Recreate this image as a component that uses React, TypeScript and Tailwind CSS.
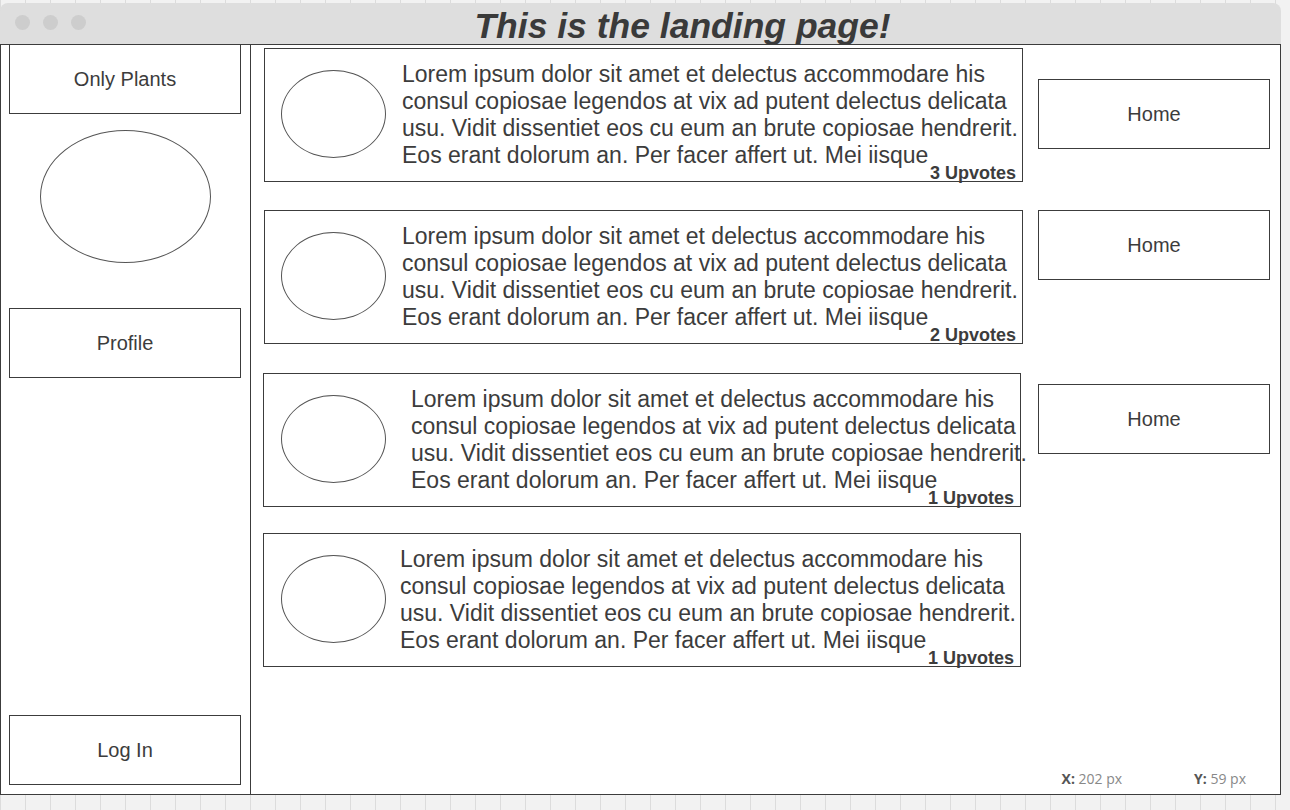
// ─── Landing Page Wireframe ──────────────────────────────
const lines = [
  'Lorem ipsum dolor sit amet et delectus accommodare his',
  'consul copiosae legendos at vix ad putent delectus delicata',
  'usu. Vidit dissentiet eos cu eum an brute copiosae hendrerit.',
  'Eos erant dolorum an. Per facer affert ut. Mei iisque',
]

const posts = [
  { votes: 3, wrap: 'ml-[13px] mt-[3px] w-[759px]', circle: 'ml-[16px]', text: 'ml-[16px]' },
  { votes: 2, wrap: 'ml-[13px] mt-[28px] w-[759px]', circle: 'ml-[16px]', text: 'ml-[16px]' },
  { votes: 1, wrap: 'ml-[12px] mt-[29px] w-[758px]', circle: 'ml-[17px]', text: 'ml-[25px]' },
  { votes: 1, wrap: 'ml-[12px] mt-[26px] w-[758px]', circle: 'ml-[17px]', text: 'ml-[14px]' },
]

function SideBox({ label, className = '' }: { label: string; className?: string }) {
  return (
    <div className={`h-[70px] w-[232px] border border-[#3c3c3c] bg-white flex items-center justify-center text-[20px] text-[#3c3c3c] ${className}`}>
      {label}
    </div>
  )
}

function Post({ votes, wrap, circle, text }: { votes: number; wrap: string; circle: string; text: string }) {
  return (
    <div className={`relative h-[134px] border border-[#3c3c3c] bg-white flex ${wrap}`}>
      <div className={`${circle} mt-[21px] h-[88px] w-[105px] rounded-[50%] border border-[#555] shrink-0`} />
      <div className={`${text} mt-[12px] text-[23px] leading-[27px] text-[#3c3c3c] whitespace-nowrap`}>
        {lines.map((l) => (
          <div key={l}>{l}</div>
        ))}
      </div>
      <span className="absolute right-[6px] bottom-[-3px] text-[18px] leading-[22px] font-bold text-[#3c3c3c]">
        {votes} Upvotes
      </span>
    </div>
  )
}

export default function App() {
  return (
    <div
      className="w-[1290px] h-[810px] overflow-hidden pt-[3px] bg-[#f2f2f2] bg-[linear-gradient(to_right,#dcdcdc_1px,transparent_1px)] bg-[length:25px_25px] bg-[position:0_0]"
      style={{ fontFamily: '"Liberation Sans", Arial, sans-serif' }}
    >
      <div className="w-[1281px] h-[792px] flex flex-col">
        {/* Title bar */}
        <div className="relative h-[41px] bg-[#dedede] rounded-t-[8px] flex items-center">
          <div className="flex gap-[13px] ml-[15px] mt-[-3px]">
            <span className="w-[15px] h-[15px] rounded-full bg-[#cdcdcd]" />
            <span className="w-[15px] h-[15px] rounded-full bg-[#cdcdcd]" />
            <span className="w-[15px] h-[15px] rounded-full bg-[#cdcdcd]" />
          </div>
          <h1 className="absolute left-0 right-0 top-[1px] text-center pl-[84px] text-[35.5px] leading-[44px] font-bold italic text-[#3a3a3a]">
            This is the landing page!
          </h1>
        </div>

        {/* Window body */}
        <div className="relative flex-1 flex border border-[#3c3c3c] bg-white">
          {/* Sidebar */}
          <div className="w-[250px] border-r border-[#3c3c3c] flex flex-col pl-[8px]">
            <SideBox label="Only Plants" className="-mt-px" />
            <div className="ml-[31px] mt-[16px] h-[133px] w-[171px] rounded-[50%] border border-[#555]" />
            <SideBox label="Profile" className="mt-[45px]" />
            <div className="flex-1" />
            <SideBox label="Log In" className="mb-[9px]" />
          </div>

          {/* Feed */}
          <div className="flex flex-col">
            {posts.map((p, i) => (
              <Post key={i} {...p} />
            ))}
          </div>

          {/* Right nav */}
          <div className="flex flex-col ml-[15px]">
            <SideBox label="Home" className="mt-[34px]" />
            <SideBox label="Home" className="mt-[61px]" />
            <SideBox label="Home" className="mt-[104px]" />
          </div>

          {/* Cursor readout */}
          <div className="absolute right-[34px] bottom-[5px] flex gap-[72px] text-[14px] text-[#888]" style={{ fontFamily: '"Open Sans", sans-serif' }}>
            <span><b className="text-[#555]">X:</b> 202 px</span>
            <span><b className="text-[#555]">Y:</b> 59 px</span>
          </div>
        </div>
      </div>
    </div>
  )
}
